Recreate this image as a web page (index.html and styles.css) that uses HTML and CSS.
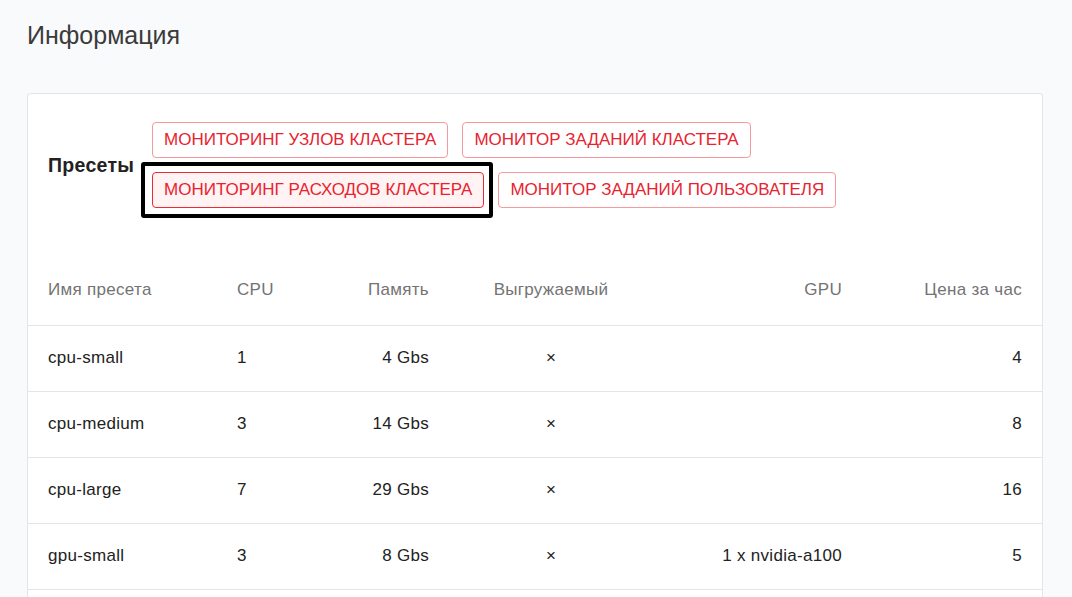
FILE: index.html
```html
<!DOCTYPE html>
<html lang="ru">
<head>
<meta charset="utf-8">
<link rel="stylesheet" href="styles.css">
</head>
<body>
<div class="page">
  <h1 class="title">Информация</h1>
  <div class="card">
    <div class="presets">
      <div class="presets-label">Пресеты</div>
      <div class="presets-buttons">
        <button class="preset-btn">Мониторинг узлов кластера</button>
        <button class="preset-btn">Монитор заданий кластера</button>
        <button class="preset-btn active">Мониторинг расходов кластера</button>
        <button class="preset-btn">Монитор заданий пользователя</button>
      </div>
    </div>
    <table class="table">
      <colgroup>
        <col class="c1"><col class="c2"><col class="c3"><col class="c4"><col class="c5"><col class="c6">
      </colgroup>
      <thead>
        <tr>
          <th class="left">Имя пресета</th>
          <th class="left">CPU</th>
          <th class="right">Память</th>
          <th class="center">Выгружаемый</th>
          <th class="right">GPU</th>
          <th class="right">Цена за час</th>
        </tr>
      </thead>
      <tbody>
        <tr><td class="left">cpu-small</td><td class="left">1</td><td class="right">4 Gbs</td><td class="center">×</td><td class="right"></td><td class="right">4</td></tr>
        <tr><td class="left">cpu-medium</td><td class="left">3</td><td class="right">14 Gbs</td><td class="center">×</td><td class="right"></td><td class="right">8</td></tr>
        <tr><td class="left">cpu-large</td><td class="left">7</td><td class="right">29 Gbs</td><td class="center">×</td><td class="right"></td><td class="right">16</td></tr>
        <tr><td class="left">gpu-small</td><td class="left">3</td><td class="right">8 Gbs</td><td class="center">×</td><td class="right">1 x nvidia-a100</td><td class="right">5</td></tr>
      </tbody>
    </table>
  </div>
</div>
</body>
</html>
```

FILE: styles.css
```css
* { box-sizing: border-box; }
html, body {
  margin: 0;
  padding: 0;
  background: #f9fafb;
  font-family: "Liberation Sans", Arial, sans-serif;
  overflow: hidden;
  height: 597px;
}
.page {
  padding: 18px 29px 0 27px;
}
.title {
  margin: 0;
  font-size: 25px;
  font-weight: 400;
  line-height: 35px;
  color: #3b3b3b;
}
.card {
  margin-top: 40px;
  background: #fff;
  border: 1px solid #e3e5e8;
  border-bottom: none;
  border-radius: 4px 4px 0 0;
  padding-bottom: 20px;
}
.presets {
  display: flex;
  padding: 28px 20px 0 20px;
  height: 161px;
  align-items: flex-start;
}
.presets-label {
  font-size: 19.5px;
  font-weight: 700;
  color: #222;
  width: 104px;
  line-height: 22px;
  margin-top: 32px;
  flex: none;
  letter-spacing: 0.3px;
}
.presets-buttons {
  display: flex;
  flex-wrap: wrap;
  gap: 14px;
  flex: 1;
}
.preset-btn {
  position: relative;
  height: 36px;
  padding: 0 11px;
  border: 1px solid #f49a9a;
  border-radius: 4px;
  background: #fff;
  color: #e8232f;
  font-family: "Liberation Sans", Arial, sans-serif;
  font-size: 17px;
  text-transform: uppercase;
  cursor: pointer;
}
.preset-btn.active {
  border-color: #ec2a35;
  background: #fff3f3;
}
.preset-btn.active::after {
  content: "";
  position: absolute;
  left: -12px;
  right: -10px;
  top: -11px;
  bottom: -11px;
  border: 4px solid #000;
  border-radius: 3px;
  pointer-events: none;
}
.table {
  width: 100%;
  border-collapse: collapse;
  table-layout: fixed;
  font-size: 17px;
  letter-spacing: 0.3px;
}
.c1 { width: 189px; }
.c2 { width: 116px; }
.c3 { width: 116px; }
.c4 { width: 204px; }
.c5 { width: 209px; }
.table th {
  font-weight: 400;
  color: #737373;
  height: 70px;
  padding: 0 20px;
  border-bottom: 1px solid #e3e5e8;
  vertical-align: middle;
}
.table td {
  color: #222;
  height: 66px;
  padding: 0 20px;
  border-bottom: 1px solid #e3e5e8;
  vertical-align: middle;
}
.left { text-align: left; }
.right { text-align: right; }
.center { text-align: center; }
.table th.center, .table td.center { padding: 0; }
```
